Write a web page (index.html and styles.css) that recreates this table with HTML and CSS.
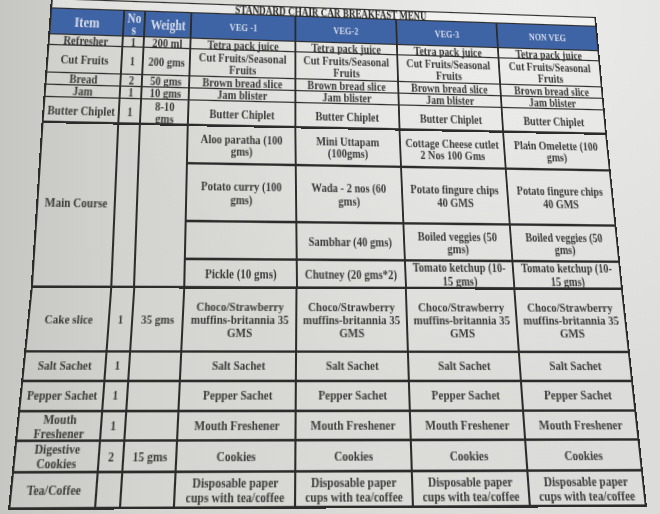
FILE: index.html
```html
<!DOCTYPE html>
<html>
<head>
<meta charset="utf-8">
<link rel="stylesheet" href="styles.css">
</head>
<body>
<div class="sheet">
  <div class="piece piece-a">
    <div class="cell title">STANDARD CHAIR CAR BREAKFAST MENU</div>

    <div class="cell head h-item">Item</div>
    <div class="cell head h-nos">No<br>s</div>
    <div class="cell head h-wt">Weight</div>
    <div class="cell head">VEG -1</div>
    <div class="cell head">VEG-2</div>
    <div class="cell head">VEG-3</div>
    <div class="cell head">NON VEG</div>

    <div class="cell">Refresher</div><div class="cell">1</div><div class="cell">200 ml</div>
    <div class="cell">Tetra pack juice</div><div class="cell">Tetra pack juice</div><div class="cell">Tetra pack juice</div><div class="cell">Tetra pack juice</div>

    <div class="cell">Cut Fruits</div><div class="cell">1</div><div class="cell">200 gms</div>
    <div class="cell">Cut Fruits/Seasonal<br>Fruits</div><div class="cell">Cut Fruits/Seasonal<br>Fruits</div><div class="cell">Cut Fruits/Seasonal<br>Fruits</div><div class="cell">Cut Fruits/Seasonal<br>Fruits</div>

    <div class="cell">Bread</div><div class="cell">2</div><div class="cell">50 gms</div>
    <div class="cell">Brown bread slice</div><div class="cell">Brown bread slice</div><div class="cell">Brown bread slice</div><div class="cell">Brown bread slice</div>

    <div class="cell">Jam</div><div class="cell">1</div><div class="cell">10 gms</div>
    <div class="cell">Jam blister</div><div class="cell">Jam blister</div><div class="cell">Jam blister</div><div class="cell">Jam blister</div>

    <div class="cell">Butter Chiplet</div><div class="cell">1</div><div class="cell">8-10<br>gms</div>
    <div class="cell">Butter Chiplet</div><div class="cell">Butter Chiplet</div><div class="cell">Butter Chiplet</div><div class="cell">Butter Chiplet</div>
  </div>

  <div class="piece piece-b">
    <div class="cell span4">Main Course</div><div class="cell span4"></div><div class="cell span4"></div>
    <div class="cell">Aloo paratha (100<br>gms)</div><div class="cell">Mini Uttapam<br>(100gms)</div><div class="cell">Cottage Cheese cutlet<br>2 Nos 100 Gms</div><div class="cell">Plain Omelette (100<br>gms)</div>
    <div class="cell">Potato curry (100<br>gms)</div><div class="cell">Wada - 2 nos (60<br>gms)</div><div class="cell">Potato fingure chips<br>40 GMS</div><div class="cell">Potato fingure chips<br>40 GMS</div>
    <div class="cell"></div><div class="cell">Sambhar (40 gms)</div><div class="cell">Boiled veggies (50<br>gms)</div><div class="cell">Boiled veggies (50<br>gms)</div>
    <div class="cell">Pickle (10 gms)</div><div class="cell">Chutney (20 gms*2)</div><div class="cell">Tomato ketchup (10-<br>15 gms)</div><div class="cell">Tomato ketchup (10-<br>15 gms)</div>
  </div>

  <div class="piece piece-c">
    <div class="cell">Cake slice</div><div class="cell">1</div><div class="cell">35 gms</div>
    <div class="cell">Choco/Strawberry<br>muffins-britannia 35<br>GMS</div><div class="cell">Choco/Strawberry<br>muffins-britannia 35<br>GMS</div><div class="cell">Choco/Strawberry<br>muffins-britannia 35<br>GMS</div><div class="cell">Choco/Strawberry<br>muffins-britannia 35<br>GMS</div>

    <div class="cell">Salt Sachet</div><div class="cell">1</div><div class="cell"></div>
    <div class="cell">Salt Sachet</div><div class="cell">Salt Sachet</div><div class="cell">Salt Sachet</div><div class="cell">Salt Sachet</div>

    <div class="cell">Pepper Sachet</div><div class="cell">1</div><div class="cell"></div>
    <div class="cell">Pepper Sachet</div><div class="cell">Pepper Sachet</div><div class="cell">Pepper Sachet</div><div class="cell">Pepper Sachet</div>

    <div class="cell">Mouth<br>Freshener</div><div class="cell">1</div><div class="cell"></div>
    <div class="cell">Mouth Freshener</div><div class="cell">Mouth Freshener</div><div class="cell">Mouth Freshener</div><div class="cell">Mouth Freshener</div>

    <div class="cell">Digestive<br>Cookies</div><div class="cell">2</div><div class="cell">15 gms</div>
    <div class="cell">Cookies</div><div class="cell">Cookies</div><div class="cell">Cookies</div><div class="cell">Cookies</div>

    <div class="cell">Tea/Coffee</div><div class="cell"></div><div class="cell"></div>
    <div class="cell">Disposable paper<br>cups with tea/coffee</div><div class="cell">Disposable paper<br>cups with tea/coffee</div><div class="cell">Disposable paper<br>cups with tea/coffee</div><div class="cell">Disposable paper<br>cups with tea/coffee</div>
  </div>
</div>
</body>
</html>
```

FILE: styles.css
```css
html, body {
  margin: 0;
  padding: 0;
}
body {
  width: 660px;
  height: 514px;
  overflow: hidden;
  background:
    radial-gradient(ellipse at 78% 4%, rgba(255, 255, 255, 0.45), rgba(255, 255, 255, 0) 55%),
    linear-gradient(to right, #c6c6c2 0%, #d4d4d0 22%, #dbdbd8 60%, #dcdcda 100%);
}
.sheet {
  width: 660px;
  height: 514px;
}
/* the printed sheet is photographed in perspective and slightly curled,
   so each band of the table gets its own projective transform */
.piece {
  box-sizing: border-box;
  width: 600px;
  display: grid;
  border-left: 2px solid #2c2c2a;
  transform-origin: 0 0;
  font-family: "Liberation Serif", "Times New Roman", serif;
  font-weight: bold;
  font-size: 11px;
  color: #3b3b39;
}
.piece-a {
  height: 104px;
  border-top: 1px solid #2c2c2a;
  grid-template-columns: 76.03px 22.26px 49.06px 111.27px 111.12px 113.36px 114.9px;
  grid-template-rows: 8.49px 21.04px 9.54px 22.71px 9.75px 10.93px 20.54px;
  line-height: 10px;
  background: rgba(255, 255, 255, 0.1);
  transform: matrix3d(0.971047, 0.0334555, 0, 0.000105223, -0.106302, 1.157597, 0, -0.000360375, 0, 0, 1, 0, 51, -2, 0, 1);
}
.piece-a .cell {
  border-bottom-width: 1px;
}
.piece-a .cell:nth-last-child(-n+7) {
  border-bottom-width: 2px;
}
.piece-b {
  height: 131px;
  grid-template-columns: 76.03px 22.26px 49.06px 111.27px 111.12px 113.36px 114.9px;
  grid-template-rows: 32.1px 47.07px 29.73px 22.1px;
  line-height: 10.5px;
  transform: matrix3d(1.008383, 0.0233647, 0, 0.000108538, -0.0934588, 1.193517, 0, -0.000358832, 0, 0, 1, 0, 41.5, 19, 0, 1);
}
.piece-c {
  height: 176px;
  grid-template-columns: 79.09px 22.96px 50.33px 112.79px 110.81px 111.19px 110.83px;
  grid-template-rows: 54.12px 23.73px 24.05px 23.56px 23.85px 26.69px;
  line-height: 11px;
  transform: matrix3d(1.01003, 0.0053518, 0, 0.0000367, -0.132337, 1.14588, 0, -0.000419943, 0, 0, 1, 0, 30.7, 53, 0, 1);
}
.cell {
  box-sizing: border-box;
  border-right: 2px solid #2c2c2a;
  border-bottom: 2px solid #2c2c2a;
  display: flex;
  align-items: center;
  justify-content: center;
  text-align: center;
  white-space: nowrap;
  padding: 0 1px;
  min-width: 0;
}
.title {
  grid-column: 1 / -1;
  font-size: 10px;
  line-height: 7px;
  color: #2a2a28;
  background: rgba(255, 255, 255, 0.3);
}
.head {
  background: #3f64a5;
  color: #d6dcea;
  font-size: 9.2px;
  line-height: 10px;
}
.h-item { font-size: 13px; }
.h-wt { font-size: 12px; }
.h-nos { font-size: 12px; line-height: 10px; }
.span4 {
  grid-row: span 4;
}
```
